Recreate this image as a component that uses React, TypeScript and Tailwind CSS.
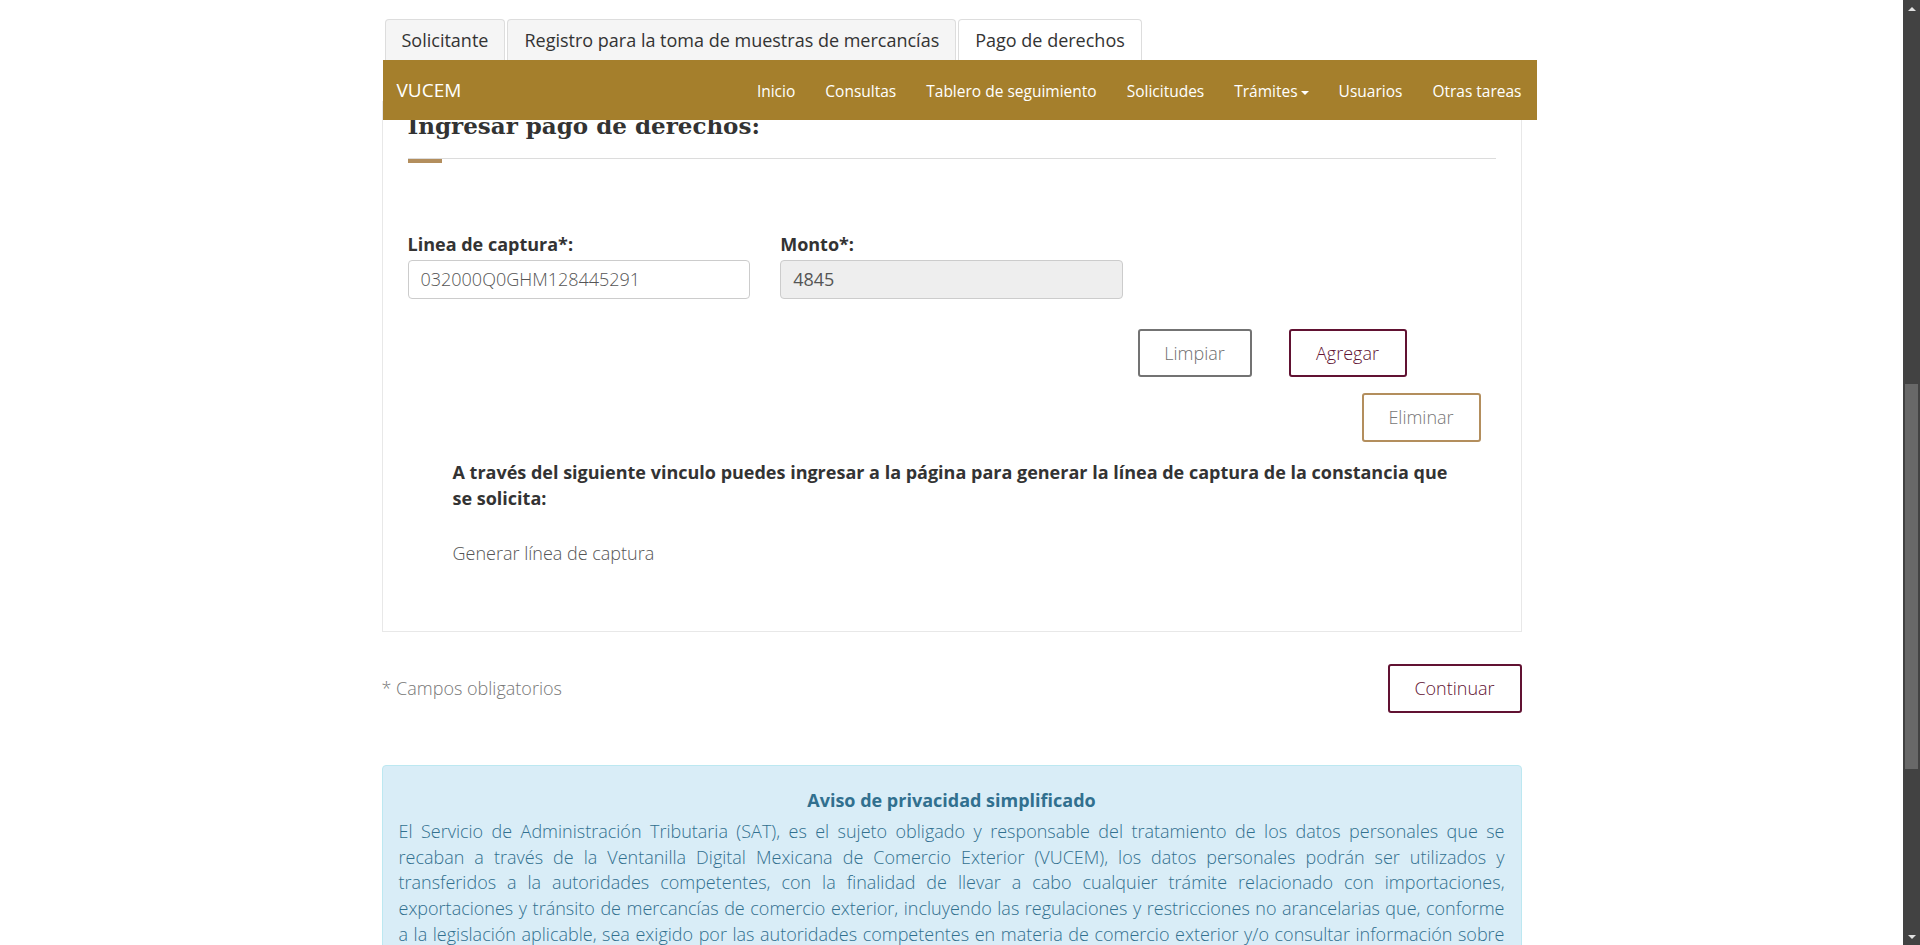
import React from 'react';

const tabs = ['Solicitante', 'Registro para la toma de muestras de mercancías', 'Pago de derechos'];
const navItems = ['Inicio', 'Consultas', 'Tablero de seguimiento', 'Solicitudes', 'Trámites', 'Usuarios', 'Otras tareas'];

const avisoLines = [
  'El Servicio de Administración Tributaria (SAT), es el sujeto obligado y responsable del tratamiento de los datos personales que se',
  'recaban a través de la Ventanilla Digital Mexicana de Comercio Exterior (VUCEM), los datos personales podrán ser utilizados y',
  'transferidos a la autoridades competentes, con la finalidad de llevar a cabo cualquier trámite relacionado con importaciones,',
  'exportaciones y tránsito de mercancías de comercio exterior, incluyendo las regulaciones y restricciones no arancelarias que, conforme',
  'a la legislación aplicable, sea exigido por las autoridades competentes en materia de comercio exterior y/o consultar información sobre',
];

function Scrollbar() {
  return (
    <div className="w-[17px] shrink-0 bg-[#424242] flex flex-col items-center">
      <div className="h-[17px] w-full flex items-center justify-center">
        <div className="w-0 h-0 border-l-[4px] border-r-[4px] border-b-[4px] border-l-transparent border-r-transparent border-b-[#e0e0e0]" />
      </div>
      <div className="flex-1 w-full flex flex-col px-[2px]">
        <div className="h-[367px]" />
        <div className="h-[385px] bg-[#686868]" />
      </div>
      <div className="h-[17px] w-full flex items-center justify-center">
        <div className="w-0 h-0 border-l-[4px] border-r-[4px] border-t-[4px] border-l-transparent border-r-transparent border-t-[#e0e0e0]" />
      </div>
    </div>
  );
}

export default function App() {
  return (
    <div className="h-[945px] w-full overflow-hidden flex bg-white font-['Open_Sans',sans-serif] text-[#333]">
      <div className="flex-1 min-w-0">
        <div className="w-[1140px] mx-auto pt-[19px]">
          {/* Tabs */}
          <div className="flex gap-[2px] ml-[3px] items-end">
            {tabs.map((t, i) => {
              const active = i === tabs.length - 1;
              return (
                <div
                  key={t}
                  className={`h-[41px] px-[16px] flex items-center text-[18px] text-[#333] border border-b-0 border-[#ddd] rounded-t-[4px] ${active ? 'bg-white' : 'bg-[#f5f5f5]'}`}
                >
                  {t}
                </div>
              );
            })}
          </div>

          {/* Navbar */}
          <div className="relative z-10 w-[1154px] ml-[1px] h-[60px] bg-[#a57f2c] flex items-center text-white">
            <div className="pl-[14px] text-[19px] leading-none mt-[1px]">VUCEM</div>
            <div className="ml-auto flex items-center mt-[4px]">
              {navItems.map((n) => (
                <div key={n} className="px-[15px] text-[15.5px] flex items-center">
                  {n}
                  {n === 'Trámites' && (
                    <span className="ml-[3px] mt-[2px] w-0 h-0 border-l-[4px] border-r-[4px] border-t-[4px] border-l-transparent border-r-transparent border-t-white" />
                  )}
                </div>
              ))}
            </div>
          </div>

          {/* Panel */}
          <div className="-mt-[19px] border border-[#e8e8e8] bg-white px-[25px] pb-[65px]">
            <h2 className="pt-[1px] font-['DejaVu_Serif',serif] font-bold text-[23px] leading-[46px] text-[#333]">
              Ingresar pago de derechos:
            </h2>
            <div className="mt-[9px] border-t border-[#dcdcdc]">
              <div className="w-[34px] h-[4px] bg-[#b38e5d]" />
            </div>

            <div className="grid grid-cols-3 gap-x-[30px] mt-[69px]">
              <div>
                <label className="block font-bold text-[18px] leading-[24px] mb-[4px]">Linea de captura*:</label>
                <div className="h-[39px] border border-[#ccc] rounded-[4px] px-[12px] flex items-center text-[18px] font-light text-[#555]">
                  032000Q0GHM128445291
                </div>
              </div>
              <div>
                <label className="block font-bold text-[18px] leading-[24px] mb-[4px]">Monto*:</label>
                <div className="h-[39px] border border-[#ccc] rounded-[4px] bg-[#eee] px-[12px] flex items-center text-[18px] text-[#555]">
                  4845
                </div>
              </div>
            </div>

            <div className="flex justify-end gap-[37px] pr-[89px] mt-[30px]">
              <button className="w-[114px] h-[48px] border-2 border-[#737373] rounded-[3px] text-[18px] font-light text-[#6e6e6e]">
                Limpiar
              </button>
              <button className="w-[118px] h-[48px] border-2 border-[#611232] rounded-[3px] text-[18px] font-light text-[#611232]">
                Agregar
              </button>
            </div>
            <div className="flex justify-end pr-[15px] mt-[16px]">
              <button className="w-[119px] h-[49px] border-2 border-[#b38e5d] rounded-[3px] text-[18px] font-light text-[#777]">
                Eliminar
              </button>
            </div>

            <div className="ml-[45px] mt-[17px]">
              <p className="font-bold text-[18px] leading-[26px]">
                <span className="block">A través del siguiente vinculo puedes ingresar a la página para generar la línea de captura de la constancia que</span>
                <span className="block">se solicita:</span>
              </p>
              <p className="mt-[29px] text-[18px] leading-[26px] font-light text-[#555]">Generar línea de captura</p>
            </div>
          </div>

          {/* Footer row */}
          <div className="flex items-center justify-between mt-[32px]">
            <span className="text-[18px] font-light text-[#777]">* Campos obligatorios</span>
            <button className="w-[134px] h-[49px] border-2 border-[#611232] rounded-[3px] text-[18px] font-light text-[#611232]">
              Continuar
            </button>
          </div>

          {/* Alert */}
          <div className="mt-[52px] bg-[#d9edf7] border border-[#bce8f1] rounded-[4px] px-[16px] pt-[22px] pb-[20px] text-[#31708f]">
            <div className="text-center font-bold text-[18px] leading-[24px]">Aviso de privacidad simplificado</div>
            <div className="mt-[7px] text-[18px] leading-[25.7px] font-light">
              {avisoLines.map((l) => (
                <span key={l} className="block text-justify [text-align-last:justify]">
                  {l}
                </span>
              ))}
              <span className="block text-justify">
                el estado de sus trámites. Para mayor información sobre el tratamiento de sus datos personales consulte el aviso de privacidad integral.
              </span>
            </div>
          </div>
        </div>
      </div>
      <Scrollbar />
    </div>
  );
}
